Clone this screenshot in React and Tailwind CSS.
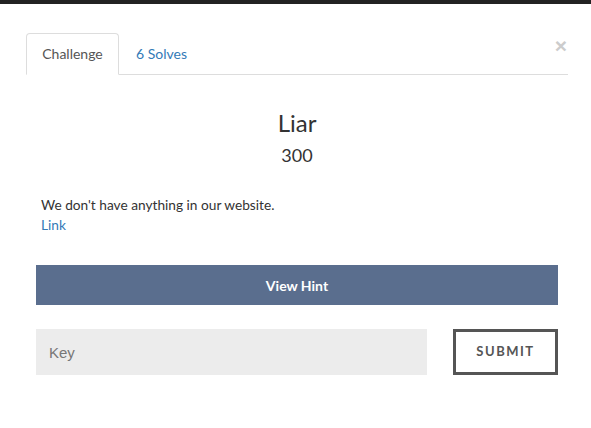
export default function App() {
  return (
    <div className="min-h-[428px] bg-white font-['Lato',sans-serif] text-[#333]">
      <div className="h-[4px] bg-[#222]" />
      <div className="pl-[26px] pr-[23px] pt-[29px]">
        <div className="flex items-end border-b border-[#ddd] relative">
          <button className="h-[42px] w-[93px] -mb-px border border-b-white border-[#ddd] rounded-t-[4px] bg-white text-[14px] text-[#555] leading-[20px]">
            Challenge
          </button>
          <button className="h-[41px] ml-[2px] px-[15px] text-[14px] text-[#337ab7] leading-[20px]">
            6 Solves
          </button>
          <span className="absolute right-[1px] top-[2px] text-[21px] font-bold leading-[21px] text-[#ccc] font-['Liberation_Sans',sans-serif]">
            ×
          </span>
        </div>
        <div className="px-[10px]">
          <h3 className="mt-[35px] text-center text-[24px] leading-[26px] text-[#333]">Liar</h3>
          <h4 className="mt-[9px] text-center text-[18px] leading-[20px] text-[#333]">300</h4>
          <div className="mt-[30px] px-[5px] text-[13.7px] leading-[20px]">
            <p>We don't have anything in our website.</p>
            <a className="text-[#337ab7]" href="#">Link</a>
          </div>
          <button className="mt-[30px] w-full h-[40px] bg-[#5a6e8e] text-white font-bold text-[14px]">
            View Hint
          </button>
          <div className="mt-[24px] flex justify-between">
            <input
              className="w-[391px] h-[46px] bg-[#ececec] px-[13px] text-[15px] font-['Liberation_Sans',sans-serif] placeholder:text-[#777] outline-none"
              placeholder="Key"
            />
            <button className="w-[105px] h-[46px] border-[3px] border-[#555] text-[#555] font-bold text-[13px] tracking-[1.5px]">
              SUBMIT
            </button>
          </div>
        </div>
      </div>
    </div>
  );
}
